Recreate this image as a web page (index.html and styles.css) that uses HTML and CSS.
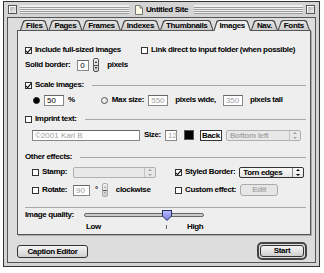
FILE: index.html
```html
<!DOCTYPE html>
<html lang="en">
<head>
    <meta charset="UTF-8">
    <title>Untitled Site</title>
    <link rel="stylesheet" href="styles.css">
</head>
<body>
    <div class="window">
        <div class="titlebar">
            <span class="winbox"></span>
            <span class="stripes"></span>
            <span class="title">
                <svg class="docicon" width="8" height="10" viewBox="0 0 8 10"><path d="M0.5 0.5 H5 L7.5 3 V9.5 H0.5 Z" fill="#fffbe8" stroke="#777"/><path d="M5 0.5 V3 H7.5" fill="none" stroke="#777"/></svg>
                Untitled Site
            </span>
            <span class="stripes"></span>
            <span class="winbox zoom"></span>
        </div>
        <div class="content">
            <div class="tabs">
                <span class="tab"><span>Files</span></span>
                <span class="tab"><span>Pages</span></span>
                <span class="tab"><span>Frames</span></span>
                <span class="tab"><span>Indexes</span></span>
                <span class="tab"><span>Thumbnails</span></span>
                <span class="tab active"><span>Images</span></span>
                <span class="tab"><span>Nav.</span></span>
                <span class="tab"><span>Fonts</span></span>
            </div>
            <div class="panel">
                <div class="row r1">
                    <label class="check col-link"><span class="cb on"></span>Include full-sized images</label>
                    <label class="check"><span class="cb"></span>Link direct to input folder (when possible)</label>
                </div>
                <div class="row r2">
                    <span>Solid border:</span>
                    <span class="field on w12">0</span>
                    <span class="stepper"></span>
                    <span class="after-step">pixels</span>
                </div>
                <div class="row section s1">
                    <label class="check"><span class="cb on"></span>Scale images:</label>
                    <span class="rule"></span>
                </div>
                <div class="row r4 indent">
                    <span class="radio on"></span>
                    <span class="field on w20">50</span>
                    <span>%</span>
                    <span class="radio gap-max"></span>
                    <span>Max size:</span>
                    <span class="field w20">550</span>
                    <span class="sp4">pixels wide,</span>
                    <span class="field w20">350</span>
                    <span class="sp4">pixels tall</span>
                </div>
                <div class="row section s2">
                    <label class="check"><span class="cb"></span>Imprint text:</label>
                    <span class="rule"></span>
                </div>
                <div class="row r6 indent-cb">
                    <span class="field w108">©2001 Karl B</span>
                    <span>Size:</span>
                    <span class="field w12">12</span>
                    <span class="swatch"></span>
                    <span class="backbtn">Back</span>
                    <span class="popup off w75">Bottom left<span class="arrows"></span></span>
                </div>
                <div class="row section s3">
                    <span class="other">Other effects:</span>
                    <span class="rule"></span>
                </div>
                <div class="row r8 indent-cb">
                    <div class="left">
                        <label class="check"><span class="cb"></span><span class="lbl">Stamp:</span></label>
                        <span class="popup off w83"><span class="arrows"></span></span>
                    </div>
                    <label class="check"><span class="cb on"></span>Styled Border:</label>
                    <span class="popup w65">Torn edges<span class="arrows"></span></span>
                </div>
                <div class="row r9 indent-cb">
                    <div class="left">
                        <label class="check"><span class="cb"></span><span class="lbl">Rotate:</span></label>
                        <span class="field w17">90</span>
                        <span class="deg">°</span>
                        <span class="stepper off"></span>
                        <span class="after-step">clockwise</span>
                    </div>
                    <label class="check"><span class="cb"></span>Custom effect:</label>
                    <span class="btn off edit">Edit</span>
                </div>
                <div class="rule full"></div>
                <div class="row slider-row">
                    <span class="slider-label">Image quality:</span>
                    <span class="track"><span class="thumb"></span></span>
                </div>
                <div class="row scale">
                    <span>Low</span>
                    <span class="tick"></span>
                    <span>High</span>
                </div>
            </div>
            <div class="actions">
                <span class="btn caption">Caption Editor</span>
                <span class="default-ring"><span class="btn start">Start</span></span>
            </div>
        </div>
    </div>
</body>
</html>
```

FILE: styles.css
```css
* {
    box-sizing: border-box;
}
body {
    margin: 0;
    background-color: #ffffff;
    color: #000000;
    font-family: "Liberation Sans", Arial, sans-serif;
    font-size: 8px;
    font-weight: bold;
    letter-spacing: -0.35px;
    line-height: 10px;
}
.window {
    margin: 1px 0 0 3px;
    width: 317px;
    height: 266px;
    border: 1px solid #333333;
    background-color: #d4d4d4;
    padding: 0 3px 3px 3px;
    display: flex;
    flex-direction: column;
}
.titlebar {
    height: 15px;
    display: flex;
    align-items: center;
    gap: 3px;
    padding: 0 1px;
}
.winbox {
    width: 9px;
    height: 9px;
    border: 1px solid #555555;
    background: linear-gradient(135deg, #aaaaaa, #f2f2f2);
    box-shadow: inset 1px 1px 0 #ffffff;
}
.stripes {
    flex: 1;
    height: 9px;
    background: repeating-linear-gradient(#f0f0f0 0 1px, #9c9c9c 1px 2px);
    border-top: 1px solid #eeeeee;
}
.title {
    display: flex;
    align-items: center;
    gap: 3px;
    padding: 0 3px;
}
.content {
    flex: 1;
    border: 1px solid #555555;
    background-color: #dddddd;
    padding: 2px 4px 0 9px;
    display: flex;
    flex-direction: column;
}
.tabs {
    display: flex;
    align-items: flex-end;
    height: 10px;
    padding-left: 3px;
}
.tab {
    position: relative;
    height: 10px;
    padding: 0 6px;
    line-height: 11px;
}
.tab::before, .tab::after {
    content: "";
    position: absolute;
    clip-path: polygon(0 100%, 3px 1px, 5px 0, calc(100% - 5px) 0, calc(100% - 3px) 1px, 100% 100%);
}
.tab::before {
    inset: 0;
    background-color: #444444;
}
.tab::after {
    inset: 1px 1px 0 1px;
    background: linear-gradient(#e6e6e6, #cccccc);
}
.tab span {
    position: relative;
    z-index: 1;
}
.tab.active {
    height: 11px;
    margin-bottom: -1px;
    z-index: 2;
}
.tab.active::after {
    background: #eeeeee;
}
.panel {
    height: 205px;
    border: 1px solid #555555;
    background-color: #eeeeee;
    box-shadow: 1px 1px 0 #aaaaaa;
    padding: 13px 4px 0 7px;
    display: flex;
    flex-direction: column;
}
.row {
    display: flex;
    align-items: center;
    height: 12px;
    gap: 4px;
    white-space: nowrap;
}
.check {
    display: flex;
    align-items: center;
    gap: 3px;
}
.cb {
    width: 7px;
    height: 7px;
    border: 1px solid #333333;
    background-color: #ffffff;
    position: relative;
}
.cb.on::after {
    content: "";
    position: absolute;
    left: 1px;
    top: -1px;
    width: 2px;
    height: 5px;
    border: solid #000000;
    border-width: 0 1px 1px 0;
    transform: rotate(40deg);
}
.radio {
    width: 7px;
    height: 7px;
    border-radius: 50%;
    border: 1px solid #555555;
    background: radial-gradient(circle at 40% 40%, #ffffff, #cccccc);
}
.radio.on {
    background: radial-gradient(circle, #000000 0 2px, #333333 3px);
    border-color: #000000;
}
.field {
    height: 11px;
    border: 1px solid #888888;
    border-top-color: #666666;
    background-color: #ffffff;
    padding: 0 2px;
    line-height: 9px;
    font-weight: normal;
    letter-spacing: 0;
    color: #a0a0a0;
}
.field.on {
    color: #000000;
}
.w12 { width: 12px; }
.w17 { width: 17px; }
.w20 { width: 20px; }
.w108 { width: 108px; }
.stepper {
    width: 6px;
    height: 14px;
    border: 1px solid #555555;
    border-radius: 2px;
    background:
        linear-gradient(#555555, #555555) center / 100% 1px no-repeat,
        linear-gradient(#f4f4f4, #cccccc);
    position: relative;
}
.stepper::before, .stepper::after {
    content: "";
    position: absolute;
    left: 1px;
    border-left: 1px solid transparent;
    border-right: 1px solid transparent;
}
.stepper::before {
    top: 2px;
    border-bottom: 2px solid #000000;
}
.stepper::after {
    bottom: 2px;
    border-top: 2px solid #000000;
}
.stepper.off {
    border-color: #aaaaaa;
}
.stepper.off::before { border-bottom-color: #999999; }
.stepper.off::after { border-top-color: #999999; }
.r1 { margin-top: 0; }
.col-link { width: 112px; }
.r2 { margin-top: 3px; }
.r2 .field { margin-left: 3px; }
.after-step { margin-left: 4px; }
.section { margin-top: 8px; gap: 8px; }
.rule {
    flex: 1;
    height: 1px;
    background-color: #a8a8a8;
}
.s2 { margin-top: 7px; }
.s3 { margin-top: 10px; }
.r4 { margin-top: 3px; }
.indent { padding-left: 8px; }
.indent-cb { padding-left: 7px; }
.gap-max { margin-left: 22px; }
.sp4 { margin: 0 3px; }
.r6 { margin-top: 4px; }
.swatch {
    width: 10px;
    height: 10px;
    background-color: #000000;
    border: 1px solid #555555;
    margin-left: 3px;
    margin-right: 2px;
}
.backbtn {
    width: 22px;
    height: 11px;
    border: 1px solid #333333;
    background-color: #ffffff;
    line-height: 9px;
    text-align: center;
}
.popup {
    position: relative;
    height: 11px;
    border: 1px solid #333333;
    border-radius: 2px;
    background: linear-gradient(#fbfbfb, #e4e4e4);
    padding: 0 3px;
    line-height: 9px;
}
.popup.off {
    border-color: #b0b0b0;
    color: #a8a8a8;
    background: #e8e8e8;
}
.arrows {
    position: absolute;
    top: 0;
    right: 0;
    bottom: 0;
    width: 11px;
    border-left: 1px solid #888888;
}
.popup.off .arrows {
    border-left-color: #c4c4c4;
}
.arrows::before, .arrows::after {
    content: "";
    position: absolute;
    left: 3px;
    border-left: 2px solid transparent;
    border-right: 2px solid transparent;
}
.arrows::before {
    top: 1px;
    border-bottom: 2px solid #000000;
}
.arrows::after {
    bottom: 1px;
    border-top: 2px solid #000000;
}
.popup.off .arrows::before { border-bottom-color: #a0a0a0; }
.popup.off .arrows::after { border-top-color: #a0a0a0; }
.w75 { width: 75px; }
.w83 { width: 83px; }
.w65 { width: 65px; }
.r8 { margin-top: 3px; }
.r9 { margin-top: 6px; }
.left {
    width: 139px;
    display: flex;
    align-items: center;
    gap: 4px;
}
.lbl { width: 27px; }
.deg { margin-left: 1px; }
.btn {
    display: inline-block;
    height: 13px;
    border: 1px solid #333333;
    border-radius: 3px;
    background: linear-gradient(#f6f6f6, #cfcfcf);
    line-height: 11px;
    text-align: center;
}
.btn.off {
    border-color: #aaaaaa;
    color: #aaaaaa;
    background: #e6e6e6;
}
.edit {
    width: 38px;
    height: 12px;
    line-height: 10px;
    margin-left: 0;
}
.full {
    flex: none;
    margin-top: 11px;
}
.slider-row { margin-top: 1px; gap: 0; }
.slider-label { width: 59px; }
.track {
    position: relative;
    width: 120px;
    height: 4px;
    border: 1px solid #666666;
    border-radius: 2px;
    background-color: #cccccc;
}
.thumb {
    position: absolute;
    left: 77px;
    top: -4px;
    width: 10px;
    height: 11px;
    background-color: #223366;
    clip-path: polygon(0 0, 100% 0, 100% 55%, 50% 100%, 0 55%);
}
.thumb::after {
    content: "";
    position: absolute;
    inset: 1px;
    background: linear-gradient(#b8b8ff, #8080e0);
    clip-path: polygon(0 0, 100% 0, 100% 55%, 50% 100%, 0 55%);
}
.scale {
    margin-top: 1px;
    height: 10px;
    padding-left: 61px;
    gap: 0;
}
.tick {
    width: 1px;
    height: 4px;
    background-color: #666666;
    margin: 0 20px 0 65px;
}
.actions {
    margin-top: 7px;
    padding-right: 4px;
    display: flex;
    justify-content: space-between;
    align-items: center;
}
.caption { width: 71px; }
.default-ring {
    border: 2px solid #444444;
    border-radius: 5px;
    padding: 1px;
}
.start { width: 44px; height: 12px; line-height: 10px; }
```
